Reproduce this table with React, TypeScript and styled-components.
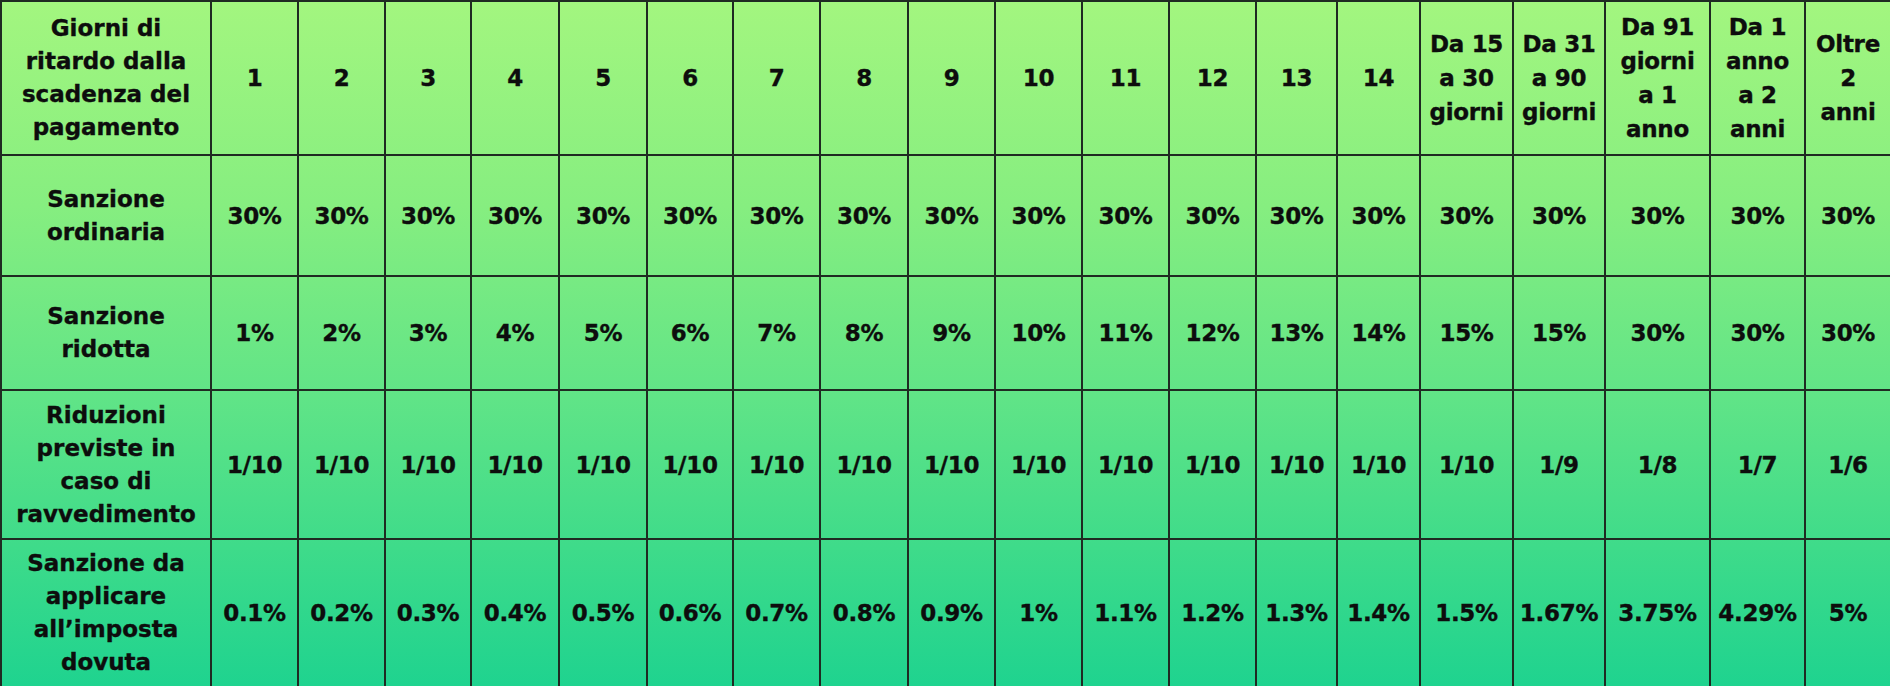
import React from 'react';
import styled, { createGlobalStyle } from 'styled-components';

const GlobalStyle = createGlobalStyle`
  html, body {
    margin: 0;
    padding: 0;
    background: #ffffff;
  }
  body {
    font-family: 'DejaVu Sans', 'Noto Sans', sans-serif;
  }
`;

const colWidths = [210, 87, 87, 86, 88, 88, 86, 87, 88, 87, 87, 87, 87, 81, 83, 93, 92, 105, 95, 86];

interface rowInt {
  label: string;
  height: number;
  head?: boolean;
  values: string[];
}

const days = ['1', '2', '3', '4', '5', '6', '7', '8', '9', '10', '11', '12', '13', '14'];

const rows: rowInt[] = [
  {
    label: 'Giorni di ritardo dalla scadenza del pagamento',
    height: 154,
    head: true,
    values: [
      ...days,
      'Da 15 a 30 giorni',
      'Da 31 a 90 giorni',
      'Da 91 giorni a 1 anno',
      'Da 1 anno a 2 anni',
      'Oltre 2 anni',
    ],
  },
  {
    label: 'Sanzione ordinaria',
    height: 121,
    values: Array(19).fill('30%'),
  },
  {
    label: 'Sanzione ridotta',
    height: 114,
    values: [...days.map((d) => d + '%'), '15%', '15%', '30%', '30%', '30%'],
  },
  {
    label: 'Riduzioni previste in caso di ravvedimento',
    height: 149,
    values: [...Array(15).fill('1/10'), '1/9', '1/8', '1/7', '1/6'],
  },
  {
    label: 'Sanzione da applicare all\u2019imposta dovuta',
    height: 148,
    values: [
      '0.1%', '0.2%', '0.3%', '0.4%', '0.5%', '0.6%', '0.7%', '0.8%', '0.9%',
      '1%', '1.1%', '1.2%', '1.3%', '1.4%', '1.5%', '1.67%', '3.75%', '4.29%', '5%',
    ],
  },
];

const App: React.FC = () => {
  return (
    <>
      <GlobalStyle />
      <Table>
        <colgroup>
          {colWidths.map((w, i) => (
            <Col key={i} $w={w} />
          ))}
        </colgroup>
        <tbody>
          {rows.map((row) => (
            <Row key={row.label} $h={row.height}>
              <LabelCell>{row.label}</LabelCell>
              {row.values.map((v, i) =>
                row.head ? <HeadCell key={i}>{v}</HeadCell> : <Cell key={i}>{v}</Cell>
              )}
            </Row>
          ))}
        </tbody>
      </Table>
    </>
  );
};

export default App;

const Table = styled.table`
  width: 1890px;
  table-layout: fixed;
  border-collapse: separate;
  border-spacing: 0;
  background: linear-gradient(180deg, #a3f67f 0%, #86ee80 30%, #60e487 58%, #3edb8a 80%, #1fd38f 100%);
  color: #0d0d0d;
`;

const Col = styled.col<{ $w: number }>`
  width: ${(p) => p.$w}px;
`;

const Row = styled.tr<{ $h: number }>`
  height: ${(p) => p.$h}px;
`;

const Cell = styled.td`
  box-sizing: border-box;
  border-top: 2px solid #1f2a22;
  border-left: 2px solid #1f2a22;
  padding: 0 2px;
  text-align: center;
  vertical-align: middle;
  font-size: 23px;
  font-weight: 700;
  line-height: 34px;
  letter-spacing: -0.3px;
  -webkit-text-stroke: 0.35px #0d0d0d;
`;

const HeadCell = styled(Cell)`
  padding: 0 6px;
`;

const LabelCell = styled(Cell)`
  padding: 0 12px;
  letter-spacing: 0;
  line-height: 33px;
`;
